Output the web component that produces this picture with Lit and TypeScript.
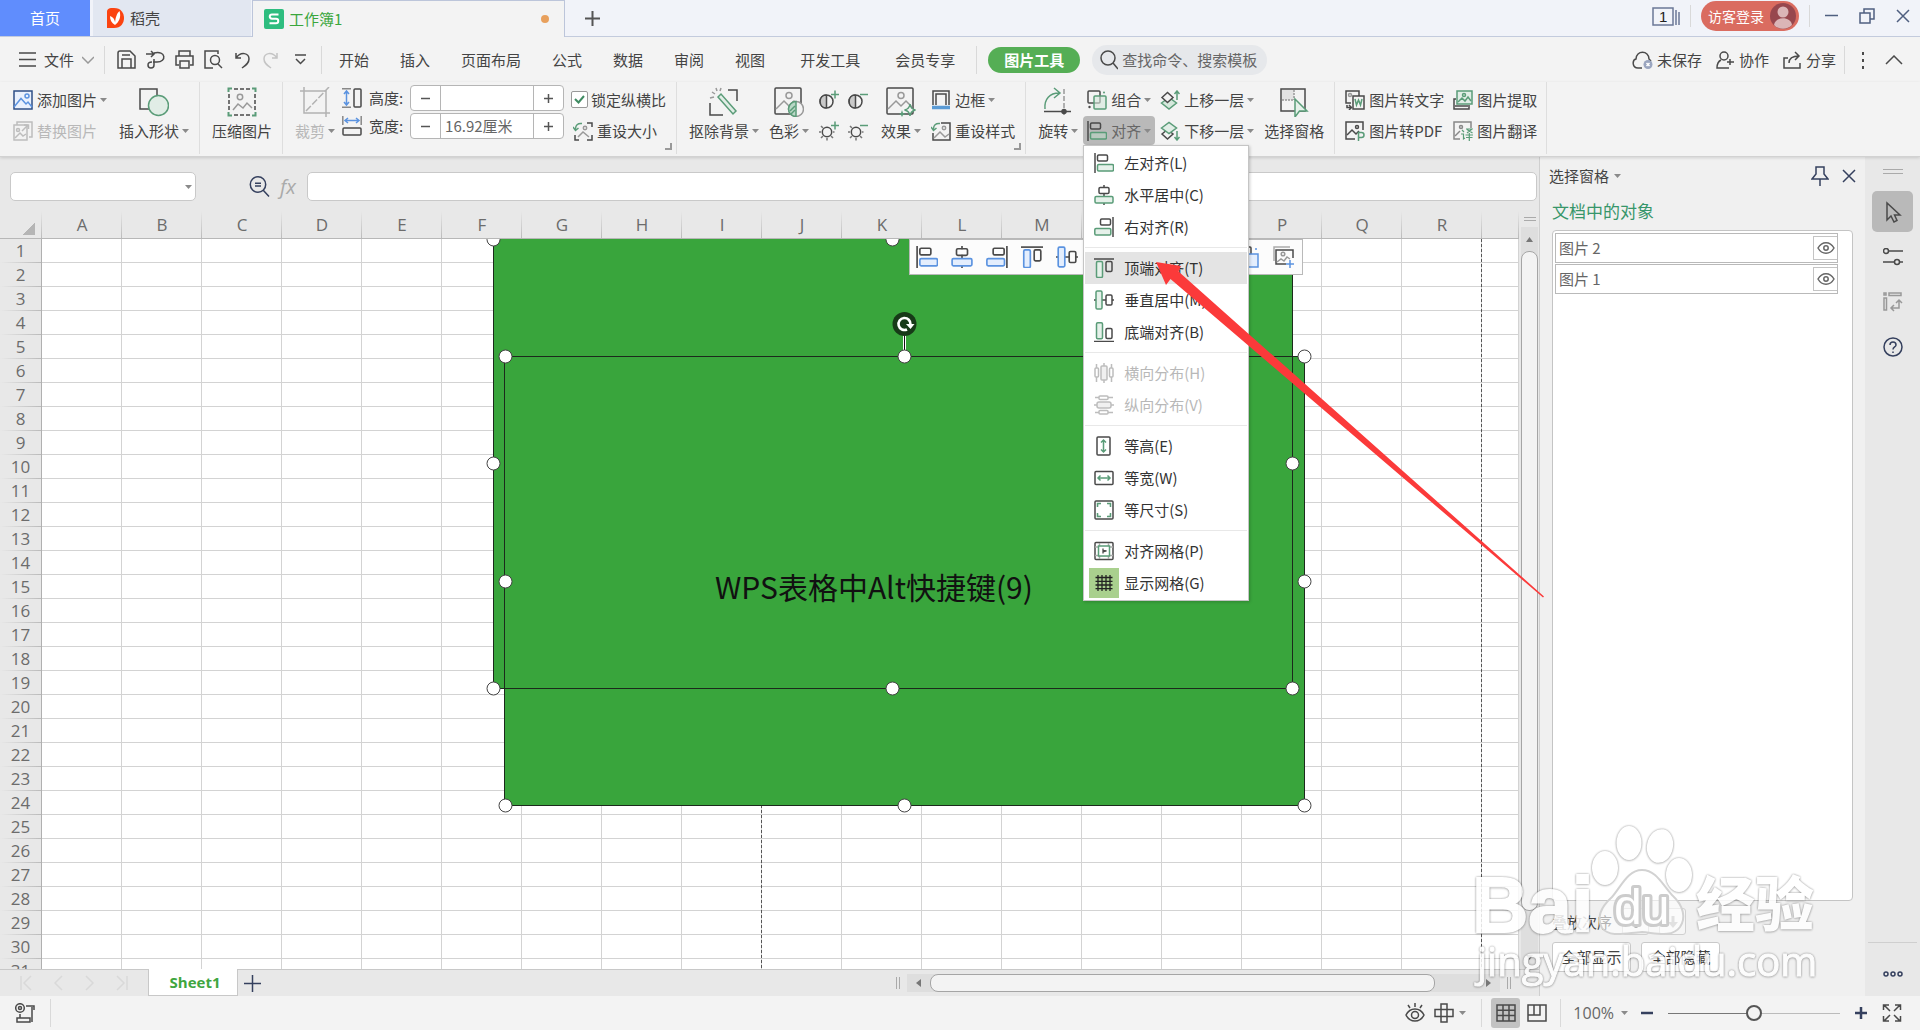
import { LitElement, html, svg, css, nothing, TemplateResult, SVGTemplateResult } from "lit";
import { customElement, state } from "lit/decorators.js";
import { classMap } from "lit/directives/class-map.js";

const INK = "#4a4a4a";
const GREEN = "#5a9c78";
const BLUE = "#5b93e0";
const NAVY = "#35405e";

/** Wraps icon strokes in an svg of the given size. */
const icon = (w: number, h: number, body: SVGTemplateResult | SVGTemplateResult[], stroke = INK, vb = `0 0 ${w} ${h}`) =>
  html`<svg class="icon" width=${w} height=${h} viewBox=${vb} fill="none" stroke=${stroke} stroke-width="1.5" aria-hidden="true">${body}</svg>`;

const caret = html`<svg class="caret" width="7" height="4" viewBox="0 0 7 4" aria-hidden="true"><path d="M0 0H7L3.5 4Z" fill="#8a8a8a"/></svg>`;

type AlignKind = "left" | "center" | "right" | "top" | "middle" | "bottom";
const alignShape: Record<AlignKind, { bar: string; a: number[]; b: number[] }> = {
  left: { bar: "M1 0V20", a: [3.5, 2, 10, 6], b: [3.5, 11.5, 16, 6.5] },
  center: { bar: "M10 0V3M10 8V12M10 18V20", a: [5, 2.5, 10, 6], b: [1, 11.5, 18, 6.5] },
  right: { bar: "M19 0V20", a: [6.5, 2, 10, 6], b: [0.8, 11.5, 16, 6.5] },
  top: { bar: "M0 1H20", a: [12, 3.5, 6, 10], b: [2.5, 3.5, 6, 16] },
  middle: { bar: "M0 10H2M8 10H12M18 10H20", a: [12, 5, 6, 10], b: [2, 1, 6, 18] },
  bottom: { bar: "M0 19.5H20", a: [12, 6.5, 6, 10], b: [2.5, 0.8, 6, 16] },
};
const rect = (r: number[], stroke: string, fill = "none") =>
  svg`<rect x=${r[0]} y=${r[1]} width=${r[2]} height=${r[3]} rx="1.2" stroke=${stroke} fill=${fill}/>`;
const alignIcon = (k: AlignKind, accent = GREEN, tint = "#e6f1ea", size = 20) =>
  icon(size, size, [svg`<path d=${alignShape[k].bar}/>`, rect(alignShape[k].a, INK), rect(alignShape[k].b, accent, tint)], INK, "0 0 20 20");

const photo = svg`<rect x="1" y="1" width="26" height="26" rx="1"/><circle cx="15" cy="8.5" r="3" stroke="#999"/><path d="M2 22L10 14L15 19L20 14L26 20" stroke="#999"/>`;

const I = {
  addPic: icon(20, 20, svg`<rect x="1" y="1" width="18" height="18" stroke="#2f4f86" fill="#eaf1fd"/><circle cx="14" cy="6" r="2" stroke=${BLUE}/><path d="M1 17L8 8.500L13 14L15 12L19 17" stroke=${BLUE}/>`),
  swapPic: icon(20, 20, svg`<path d="M4 4V1H19V16H16"/><rect x="1" y="4" width="13" height="15" fill="#f3f3f3"/><circle cx="5" cy="9" r="1.500"/><path d="M2 17L7 12L10 15L13 13"/><path d="M9 10L15 4M11 4H15.500V8"/>`, "#bdbdbd"),
  shapes: icon(30, 30, svg`<rect x="1" y="2" width="17" height="20"/><circle cx="19.500" cy="18.500" r="10" stroke=${GREEN} fill="#e1ede6"/>`),
  compress: icon(30, 30, svg`<path d="M7 2H23M7 28H23M2 7V23M28 7V23" stroke-dasharray="4 2"/><path d="M1.500 5V1.500H5M25 1.500H28.500V5M1.500 25V28.500H5M25 28.500H28.500V25" stroke=${GREEN} stroke-width="2"/><circle cx="13" cy="10" r="2.700" stroke="#999"/><path d="M6 23L11 17L16 21L20 16L25 21" stroke="#999"/>`),
  crop: icon(30, 30, svg`<path d="M4 0V26H30M0 4H26V30"/><path d="M6 24L29 0" stroke-dasharray="7 2"/>`, "#b2b2b2"),
  height: icon(20, 20, svg`<rect x="12" y="1" width="7" height="18" rx="1"/><path d="M0 .8H9M0 19.200H9" stroke="#888"/><path d="M4.500 3V17M2 6L4.500 3L7 6M2 14L4.500 17L7 14" stroke=${BLUE}/>`),
  width: icon(20, 20, svg`<rect x="1" y="12" width="18" height="7" rx="1"/><path d="M.8 0V9M19.200 0V9" stroke="#888"/><path d="M3 4.500H17M6 2L3 4.500L6 7M14 2L17 4.500L14 7" stroke=${BLUE}/>`),
  resetSize: icon(20, 20, svg`<path d="M14 2H19V6M19 14V19H14M6 19H2V14" /><circle cx="12" cy="7" r="1.700" stroke="#999"/><path d="M5 16L10 11L16 16" stroke="#999"/><path d="M2.500 9C2 4 5 2 9 2.500M0 6L2.500 9.500L5.500 7" stroke=${GREEN}/>`),
  resetStyle: icon(20, 20, svg`<path d="M10 2H19V19H2V12"/><circle cx="13" cy="7" r="1.700" stroke="#999"/><path d="M3 17L9 11L14 16L18 13" stroke="#999"/><path d="M2.500 9C2 4 5 2 9 2.500M0 6L2.500 9.500L5.500 7" stroke=${GREEN}/>`),
  cutout: icon(30, 30, svg`<path d="M19 3H28V14M1 16V28H14" /><path d="M9 10L12 7L27 24L24 27Z" stroke=${GREEN} fill="#e1ede6"/><path d="M7 1L8 4M3 5L6 7M1 11L5 10M12 1L11 4" stroke="#999"/>`),
  color: icon(30, 30, svg`${photo}<circle cx="22" cy="22" r="7.500" fill="#f3f3f3" stroke="#999"/><path d="M22 14.500A7.500 7.500 0 0 0 22 29.500Z" fill="#b9d7c6" stroke=${GREEN}/><path d="M16 24L21 19M17 27L21 23" stroke=${GREEN}/>`),
  effect: icon(30, 30, svg`${photo}<path d="M24 17Q24.500 22 29.500 23Q24.500 24 24 29Q23.500 24 18.500 23Q23.500 22 24 17Z" fill="#f3f3f3" stroke=${GREEN}/><path d="M16 23L17 26L20 27L17 28L16 30L15 28L13 27L15 26Z" fill=${GREEN} stroke="none"/>`),
  contrast: (sign: string) => icon(20, 20, svg`<circle cx="7.500" cy="11.500" r="6.500"/><path d="M7.500 5V18M7.500 5C-1 5 -1 18 7.500 18" fill="#c9c9c9"/><path d=${sign === "+" ? "M12 4.500H20M16 .5V8.500" : "M12 4.500H20"} stroke=${GREEN}/>`),
  light: (sign: string) => icon(20, 20, svg`<circle cx="8" cy="11" r="4.700"/><path d="M2 5L4 7M0 11H2M2 17L4 15M8 17V19.500M14 17L12 15M14 11H15.500" stroke="#777"/><path d=${sign === "+" ? "M12 4.500H20M16 .5V8.500" : "M12 4.500H20"} stroke=${GREEN}/>`),
  border: icon(20, 20, svg`<path d="M2 15V1H18V15"/><path d="M5 15V4H15V15"/><path d="M1 17.500H19" stroke="#5b9bd5" stroke-width="3.500"/>`),
  rotate: icon(30, 30, svg`<path d="M2 22C1 12 7 6 16 6M11 1L17 6L11 11" stroke=${GREEN}/><path d="M21 2V30" stroke="#999" stroke-dasharray="5 2"/><path d="M1 24.500H28"/><circle cx="21" cy="24.500" r="2" fill=${INK}/>`),
  group: icon(20, 20, svg`<rect x="1" y="1" width="12" height="12" rx="1"/><rect x="7" y="6" width="12" height="13" rx="1" stroke=${GREEN} fill="#d5e8dc" fill-opacity=".6"/><circle cx="17" cy="2.500" r="1" fill=${GREEN} stroke="none"/><circle cx="2.500" cy="17" r="1.200" fill=${INK} stroke="none"/>`),
  up: icon(20, 20, svg`<path d="M1.500 13L9 7.500L16.500 13L9 19Z" stroke=${GREEN} fill="#d5e8dc"/><path d="M2 7.500L7.500 2.500L13 7.500L7.500 12.500Z" fill="#f3f3f3"/><path d="M17 10V1M14.500 4L17 1L19.500 4" stroke=${GREEN}/>`),
  down: icon(20, 20, svg`<path d="M2 13L7.500 8.500L13 13L7.500 18Z"/><path d="M1.500 7L9 1.500L16.500 7L9 12.500Z" stroke=${GREEN} fill="#e1ede6"/><path d="M17 10V19M14.500 16L17 19L19.500 16" stroke=${GREEN}/>`),
  pane: icon(30, 30, svg`<rect x="2" y="2" width="24" height="22" fill="none"/><path d="M3 3H15V13H3Z" fill="#e3e3e3" stroke="none"/><path d="M15 3V13M3 13H15" stroke="#999" stroke-dasharray="2 1"/><path d="M16 12V30L20.500 24H28Z" stroke=${GREEN} fill="#e6f1ea"/>`),
  toText: icon(20, 20, svg`<path d="M14 6V1H1V13H6"/><circle cx="5" cy="5" r="1.500" stroke="#999"/><rect x="8" y="6" width="11" height="13" fill="#f3f3f3"/><path d="M10 9L11.500 15L13.500 10L15.500 15L17 9" stroke=${GREEN}/><path d="M2 15V17.500H6M4 15L6.500 17.500L4 20"/>`),
  toPdf: icon(20, 20, svg`<path d="M10 18H1V1H18V9"/><circle cx="12" cy="6" r="1.500"/><path d="M2 14L7 9L11 13L14 10"/><path d="M13.500 20V11.500H16.500A2.500 2.500 0 0 1 16.500 16.500H13.500" stroke=${GREEN}/>`),
  extract: icon(20, 20, svg`<path d="M3 9H1V19H16V17"/><path d="M2 16H17"/><rect x="4" y="1" width="15" height="13" stroke=${GREEN} fill="#e1ede6"/><circle cx="11" cy="5" r="1.500" stroke=${GREEN}/><path d="M5 12L9 8L12 11L15 7L18 11" stroke=${GREEN}/>`),
  translate: icon(20, 20, svg`<path d="M7 18H1V1H18V7" stroke="#888"/><circle cx="8" cy="6" r="1.500" stroke="#888"/><path d="M2 15L7 10" stroke="#888"/><path d="M9 9L11 11M8 13H10.500V18L12 17M13 8H19L14 12M14 8.500L19.500 12M12.500 14H20M13 16.500H19.500M16.300 12V20" stroke=${GREEN} stroke-width="1.200"/>`),
  distH: icon(20, 20, svg`<path d="M2.500 1V5M2.500 14V19M17.500 1V5M17.500 14V19M10 0V3M10 17V20"/><rect x="1" y="5" width="3.500" height="9" rx="1"/><rect x="7" y="3" width="6" height="14" rx="1" fill="#f0f0f0"/><rect x="15.500" y="5" width="3.500" height="9" rx="1"/>`, "#bdbdbd"),
  distV: icon(20, 20, svg`<path d="M1 2.500H5M14 2.500H19M1 17.500H5M14 17.500H19M0 10H3M17 10H20"/><rect x="5" y="1" width="9" height="3.500" rx="1"/><rect x="3" y="7" width="14" height="6" rx="2" fill="#f0f0f0"/><rect x="5" y="15.500" width="9" height="3.500" rx="1"/>`, "#bdbdbd"),
  eqH: icon(20, 20, svg`<rect x="3" y="1" width="13" height="18" rx="1"/><path d="M9.500 4V16M7 6.500L9.500 4L12 6.500M7 13.500L9.500 16L12 13.500" stroke=${GREEN}/>`),
  eqW: icon(20, 20, svg`<rect x="1" y="3.500" width="18" height="13" rx="1"/><path d="M4 10H16M6.500 7.500L4 10L6.500 12.500M13.500 7.500L16 10L13.500 12.500" stroke=${GREEN}/>`),
  eqS: icon(20, 20, svg`<rect x="1" y="1" width="18" height="18" rx="1"/><path d="M3.500 7V3.500H7M13 3.500H16.500V7M16.500 13V16.500H13M7 16.500H3.500V13" stroke=${GREEN} fill="#eef3f0"/>`),
  snap: icon(20, 20, svg`<rect x="1" y="1.500" width="18" height="17" rx="1"/><path d="M1 6H19M1 14.500H19M5.500 2V18M14.500 2V18" stroke="#aaa"/><rect x="4.500" y="5" width="11" height="10" fill="#fff" stroke=${GREEN}/><path d="M9 7.500V12.500M9 9.500L12.500 10L9 11" stroke-width="1.300"/>`),
  grid: icon(20, 20, svg`<path d="M4 2V18M8 2V18M12 2V18M16 2V18M1.500 4.500H18.500M1.500 8.300H18.500M1.500 12H18.500M1.500 15.700H18.500" stroke="#222" stroke-width="1.300"/>`),
  eye: icon(18, 14, svg`<path d="M1 7C5 0 13 0 17 7C13 14 5 14 1 7Z"/><circle cx="9" cy="7" r="2.200"/>`, "#666"),
};

const COLS = "ABCDEFGHIJKLMNOPQR".split("");
const ROWS = Array.from({ length: 31 }, (_, i) => i + 1);

interface MenuItem { label: string; icon: TemplateResult; off?: boolean; hot?: boolean; on?: boolean }
const ALIGN_MENU: MenuItem[][] = [
  [
    { label: "左对齐(L)", icon: alignIcon("left") },
    { label: "水平居中(C)", icon: alignIcon("center") },
    { label: "右对齐(R)", icon: alignIcon("right") },
  ],
  [
    { label: "顶端对齐(T)", icon: alignIcon("top"), hot: true },
    { label: "垂直居中(M)", icon: alignIcon("middle") },
    { label: "底端对齐(B)", icon: alignIcon("bottom") },
  ],
  [
    { label: "横向分布(H)", icon: I.distH, off: true },
    { label: "纵向分布(V)", icon: I.distV, off: true },
  ],
  [
    { label: "等高(E)", icon: I.eqH },
    { label: "等宽(W)", icon: I.eqW },
    { label: "等尺寸(S)", icon: I.eqS },
  ],
  [
    { label: "对齐网格(P)", icon: I.snap },
    { label: "显示网格(G)", icon: I.grid, on: true },
  ],
];

const HANDLES = [
  [493, 239], [892, 239], [493, 463], [1292, 463], [493, 688], [892, 688], [1292, 688],
  [505, 356], [904, 356], [1304, 356], [505, 581], [1304, 581], [505, 805], [904, 805], [1304, 805],
];

@customElement("app-root")
export class AppRoot extends LitElement {
  static styles = css`
    :host {
      display: flex;
      flex-direction: column;
      position: relative;
      height: 100vh;
      overflow: hidden;
      background: #e8e8e8;
      color: #444;
      font: 15px/20px "Noto Sans CJK SC", "Open Sans", sans-serif;
      white-space: nowrap;
    }
    *, *::before, *::after { box-sizing: border-box; }
    button, input { font: inherit; color: inherit; margin: 0; padding: 0; border: 0; background: none; outline: none; }
    button { display: flex; align-items: center; }
    a { color: inherit; text-decoration: none; }
    .icon, .caret { flex: none; display: block; }
    .grow { flex: 1; }

    .titlebar { display: flex; height: 37px; background: #f1f3f9; border-bottom: 1px solid #c3cbdd; flex: none; }
    .home { width: 90px; justify-content: center; background: #608dfd; color: #fff; }
    .doc { display: flex; width: 158px; margin-left: 3px; padding-left: 14px; gap: 5px; background: #e2e7f1; }
    .doc.active { width: 313px; margin: 0 0 -1px 1px; padding-left: 11px; background: #f3f3f3; border: 1px solid #bcc5da; border-bottom: 0; color: #3aa63c; }
    .dot { width: 8px; height: 8px; margin: 0 15px 0 auto; border-radius: 4px; background: #e8a05c; }
    .newtab { width: 54px; justify-content: center; }
    .winctl { display: flex; align-items: center; gap: 10px; padding: 0 10px 5px 0; }
    .winctl .sep { height: 22px; }
    .winctl .ctls { display: flex; align-items: center; gap: 21px; padding-left: 5px; }
    .winnum { font: 15px "Liberation Sans", sans-serif; }
    .login { height: 30px; padding: 0 3px 0 7px; gap: 6px; border-radius: 15px; background: #da6c60; color: #fff; font-size: 14px; }
    .sep { width: 1px; height: 28px; background: #d9d9d9; flex: none; }

    .menubar { display: flex; align-items: center; height: 45px; padding: 0 13px 0 19px; background: #f3f3f3; flex: none; }
    .file { gap: 8px; margin-right: 10px; }
    .quick { display: flex; align-items: center; gap: 10px; padding: 0 11px 0 12px; }
    .tabs { display: flex; align-items: center; gap: 31px; padding: 0 21px 0 17px; }
    .tabs .wide { margin-left: 4px; }
    .pill { height: 26px; margin: 0 12px 0 11px; padding: 0 16px; border-radius: 13px; background: #55ae55; color: #fff; font-weight: 700; }
    .search { display: flex; align-items: center; width: 175px; height: 30px; padding: 0 8px; gap: 4px; border-radius: 15px; background: #e6e8eb; color: #666; }
    .search input { flex: 1; min-width: 0; }
    .search input::placeholder { color: #666; opacity: 1; }
    .share { display: flex; align-items: center; gap: 14px; padding-right: 8px; }
    .share button { gap: 4px; }
    .more { display: flex; align-items: center; gap: 12px; padding: 0 4px; }

    .ribbon { display: flex; height: 75px; background: #f3f3f3; border-bottom: 1px solid #d2d2d2; box-shadow: 0 1px 3px #0002; flex: none; position: relative; z-index: 3; }
    .rgroup { display: flex; position: relative; padding: 3px 10px 0 12px; border-right: 1px solid #dedede; margin-bottom: 2px; }
    .rgroup.first { padding-left: 13px; }
    .rgroup.last { padding: 3px 9px 0 10px; }
    .rows { display: grid; grid-template-rows: 29px 29px; gap: 2px; }
    .rows.tight { grid-template-rows: 26px 26px; }
    .small { gap: 4px; }
    .small .caret { margin-left: -1px; }
    .off { color: #b8b8b8; }
    .big { flex-direction: column; height: 61px; padding-top: 2px; gap: 4px; justify-content: flex-start; }
    .big .lbl { display: flex; align-items: center; gap: 3px; }
    .corner { position: absolute; right: 4px; bottom: 4px; width: 7px; height: 7px; border: solid #999; border-width: 0 2px 2px 0; }
    .s5 { gap: 5px; } .s7 { gap: 7px; } .s9 { gap: 9px; } .s10 { gap: 10px; } .s12 { gap: 12px; }
    .dim { display: flex; align-items: center; gap: 7px; }
    .dim label { width: 34px; }
    .spin { display: grid; grid-template-columns: 29px 94px 29px; width: 154px; height: 26px; border: 1px solid #b5b5b5; border-radius: 4px; background: #fff; }
    .spin button { justify-content: center; }
    .spin input { border: solid #b5b5b5; border-width: 0 1px; padding-left: 4px; min-width: 0; color: #666; }
    .check { display: flex; align-items: center; gap: 3px; }
    .check input { appearance: none; width: 17px; height: 17px; border: 1px solid #999; border-radius: 2px; background: #fff url("data:image/svg+xml,%3Csvg xmlns='http://www.w3.org/2000/svg' viewBox='0 0 15 15'%3E%3Cpath d='M3 7L6.500 10.500L12 4' fill='none' stroke='%233f8b62' stroke-width='2'/%3E%3C/svg%3E"); }
    .indent { margin-left: 2px; }
    .mini { display: flex; align-items: center; gap: 9px; padding-right: 3px; }
    .pad { padding: 0 4px; }
    .anchor { position: relative; }
    .pressed { height: 29px; background: #b9b9b9; border-radius: 4px; color: #666; }

    .menu { position: absolute; top: 29px; left: 0; width: 166px; padding: 1px; margin: 0; background: #fff; border: 1px solid #c5c5c5; box-shadow: 1px 1px 3px #0003; z-index: 5; }
    .menu .item { width: 100%; height: 32px; gap: 5px; padding-left: 4px; color: #333; }
    .menu .item.off { color: #b8b8b8; }
    .menu .item.hot { background: #e4e4e4; }
    .menu .ico { display: grid; place-items: center; width: 30px; height: 30px; }
    .menu .on .ico { background: #a9d08e; }
    .menu hr { height: 1px; margin: 4px 0; border: 0; background: #e8e8e8; }

    .main { display: flex; flex: 1; min-height: 0; }
    .book { display: flex; flex-direction: column; flex: 1; min-width: 0; }
    .formula { display: flex; align-items: center; height: 54px; padding: 5px 2px 0 10px; flex: none; }
    .name { display: flex; align-items: center; width: 186px; height: 29px; padding-right: 3px; border: 1px solid #c9c9c9; border-radius: 5px; background: #fff; }
    .name input { flex: 1; min-width: 0; }
    .fxset { display: flex; align-items: center; gap: 10px; width: 111px; padding-left: 53px; }
    .fx { font: italic 20px/20px "Open Sans", sans-serif; color: #aaa; }
    .fbox { flex: 1; height: 29px; border: 1px solid #c9c9c9; border-radius: 5px; background: #fff; padding: 0 6px; }

    .sheetwrap { display: flex; flex: 1; min-height: 0; }
    .sheet { position: relative; flex: 1; overflow: hidden; }
    table { width: 100%; table-layout: fixed; border-collapse: separate; border-spacing: 0; background: #fff; }
    th { padding: 0; font: 17px/22px "Open Sans", sans-serif; color: #6c6c6c; background: #e8e8e8; }
    thead th { height: 28px; border-bottom: 1px solid #b7b7b7; background: linear-gradient(#e8e8e8, #bbb) right / 1px 100% no-repeat #e8e8e8; }
    tbody th { height: 24px; border-right: 1px solid #b0b0b0; background: linear-gradient(90deg, #e8e8e8, #bbb) bottom / 100% 1px no-repeat #e8e8e8; }
    td { padding: 0; border: solid #d3d3d3; border-width: 0 1px 1px 0; }
    .c0 { width: 42px; } .c { width: 80px; }
    .all { display: block; width: 13px; height: 13px; margin: 8px 0 0 22px; background: linear-gradient(135deg, transparent 50%, #b5b5b5 50%); }
    .layer { position: absolute; inset: 28px 0 0 42px; overflow: hidden; }
    .layer svg.art { display: block; }
    .caption { font: 30px "Noto Sans CJK SC", sans-serif; fill: #111; }
    .float { position: absolute; left: 867px; top: 0; display: flex; align-items: center; gap: 13px; width: 394px; height: 36px; padding: 0 8px 0 6px; background: #fcfcfc; border: 1px solid #b9b9b9; }
    .float .end { margin-left: auto; }

    .vbar { display: flex; flex-direction: column; align-items: center; width: 20px; padding: 6px 1px 0 2px; }
    .grip { width: 12px; height: 4px; border: solid #aaa; border-width: 1px 0; margin-bottom: 6px; flex: none; }
    .vtrack { display: flex; flex-direction: column; flex: 1; width: 17px; background: #dedede; }
    .vtrack button { height: 24px; justify-content: center; }
    .thumb { border: 1px solid #a5a5a5; border-radius: 8px; background: #f3f3f3; }
    .vtrack .thumb { height: 660px; max-height: 90%; }

    .sheets { display: flex; align-items: center; height: 27px; border-top: 1px solid #c8c8c8; flex: none; }
    .nav { display: flex; align-items: center; gap: 20px; width: 148px; padding-left: 20px; }
    .tab1 { width: 90px; height: 27px; margin-top: -1px; padding-left: 4px; justify-content: center; background: #fff; border: solid #c8c8c8; border-width: 0 1px 1px; color: #3fa63f; font: 700 15px/20px "Open Sans", sans-serif; }
    .addsheet { margin-left: 6px; }
    .hset { display: flex; align-items: center; gap: 7px; width: 643px; padding-right: 28px; }
    .vgrip { width: 4px; height: 12px; border: solid #aaa; border-width: 0 1px; }
    .htrack { display: flex; align-items: center; flex: 1; height: 18px; background: #dedede; padding: 0 9px; gap: 9px; }
    .htrack .thumb { flex: 0 1 505px; height: 18px; }

    .side { display: flex; flex-direction: column; width: 326px; padding: 0 12px; background: #f0f0f0; border-left: 1px solid #cfcfcf; }
    .sidehead { display: flex; align-items: center; height: 38px; margin-left: -3px; gap: 5px; }
    .sidehead .x { margin: 0 -3px 0 8px; }
    .side h2 { margin: 6px 0 9px; font: 17px/20px "Noto Sans CJK SC", sans-serif; color: #37966a; }
    .objs { flex: 1; min-height: 0; margin: 0; padding: 2px 14px 0 2px; list-style: none; background: #fff; border: 1px solid #c4c4c4; border-radius: 4px; }
    .objs li { display: flex; align-items: center; height: 30px; margin-bottom: 1px; padding-left: 3px; border: 1px solid #b9b9b9; color: #666; }
    .objs li button { width: 24px; height: 24px; margin-left: auto; justify-content: center; border: 1px solid #c4c4c4; border-right: 0; }
    .order { display: flex; align-items: center; gap: 10px; height: 27px; margin: 7px 0 7px; }
    .order button { width: 27px; height: 27px; justify-content: center; border: 1px solid #d0d0d0; border-radius: 3px; background: #f6f6f6; }
    .vis { display: flex; gap: 10px; margin-bottom: 24px; }
    .vis button { width: 79px; height: 30px; justify-content: center; border: 1px solid #c9c9c9; border-radius: 3px; background: #fff; }

    .strip { display: flex; flex-direction: column; align-items: center; width: 55px; padding: 12px 0 19px; }
    .strip .grip { width: 20px; height: 5px; margin-bottom: 17px; }
    .tool { width: 41px; height: 41px; justify-content: center; margin-bottom: 4px; border-radius: 5px; }
    .tool.sel { background: #b9b9b9; }
    .strip .line { width: 49px; height: 1px; background: #cfcfcf; margin-bottom: 28px; }

    .status { display: flex; align-items: center; height: 34px; padding: 0 18px 0 15px; background: #f3f3f3; flex: none; }
    .status .macro { margin-right: 15px; }
    .status .views { display: flex; align-items: center; gap: 7px; }
    .status .views.a { gap: 9px; margin-right: 15px; }
    .status .views.b { padding: 0 13px 0 9px; }
    .status .cross { gap: 5px; }
    .gridbtn { width: 29px; height: 30px; justify-content: center; border-radius: 3px; background: #c2c2c2; }
    .zoom { gap: 7px; padding: 0 13px 0 12px; color: #666; font: 16px/20px "Open Sans", sans-serif; }
    .status input { appearance: none; width: 172px; height: 16px; margin: 0 15px; background: linear-gradient(90deg, #777 50%, #bbb 50%) center / 100% 1px no-repeat; }
    .status input::-webkit-slider-thumb { appearance: none; width: 16px; height: 16px; border: 2px solid #555; border-radius: 8px; background: #f3f3f3; }
    .full { margin-left: 15px; }

    .arrow { position: absolute; left: 1156px; top: 262px; z-index: 8; pointer-events: none; }
    .mark { position: absolute; right: 90px; bottom: 20px; z-index: 9; pointer-events: none; }
    .mark .glow { filter: drop-shadow(0 0 1px #0007) drop-shadow(0 1px 1px #0002); opacity: .84; }
    .mark .bai { font: 700 78px "Liberation Sans", sans-serif; fill: #fff; stroke: #fff; stroke-width: 2; }
    .mark .du { font: 50px "Liberation Sans", sans-serif; fill: #fff; stroke: #ccc; stroke-width: 6; stroke-linejoin: round; paint-order: stroke; }
    .mark .jy { font: 900 59px "Noto Sans CJK SC", sans-serif; fill: #fff; }
    .mark .url { font: 40px "Open Sans", sans-serif; fill: #fff; stroke: #fff; stroke-width: 1; }
  `;

  @state() private menuOpen = true;
  @state() private zoomLevel = 50;

  private big(label: string, glyph: TemplateResult, drop = true, off = false) {
    return html`<button class=${classMap({ big: true, off })} ?disabled=${off}>${glyph}<span class="lbl">${label}${drop ? caret : nothing}</span></button>`;
  }
  private small(label: string, glyph: TemplateResult, drop = false, cls = "") {
    return html`<button class="small ${cls}">${glyph}<span>${label}</span>${drop ? caret : nothing}</button>`;
  }
  private spin(id: string, label: string, value: string, glyph: TemplateResult) {
    return html`<div class="dim">${glyph}<label for=${id}>${label}</label>
      <div class="spin">
        <button aria-label="减小${label}">${icon(9, 9, svg`<path d="M0 4.500H9"/>`, "#555")}</button>
        <input id=${id} .value=${value} />
        <button aria-label="增大${label}">${icon(9, 9, svg`<path d="M0 4.500H9M4.500 0V9"/>`, "#555")}</button>
      </div></div>`;
  }

  private renderTitle() {
    return html`<header class="titlebar">
      <button class="home">首页</button>
      <button class="doc">${icon(18, 20, svg`<path d="M0 4C0 1 2 0 5 0H7C14 0 17 5 17 10S14 20 7 20H0Z" fill="#fb4310" stroke="none"/><path d="M8 17C4.500 15 3 12 3 8C6 9 7.500 11 8 14M8 17C8 10 10 5 12.500 3C14.500 9 12 14 8 17" fill="#fff" stroke="none"/>`)}<span>稻壳</span></button>
      <button class="doc active">${icon(20, 20, svg`<rect width="20" height="20" rx="2" fill="#2ebd7f" stroke="none"/><path d="M14.500 5.500H8C5 5.500 5 9.700 8 9.700H12C15 9.700 15 14.300 12 14.300H5.500" stroke="#fff" stroke-width="2"/>`)}<span>工作簿1</span><i class="dot"></i></button>
      <button class="newtab" aria-label="新建标签">${icon(15, 15, svg`<path d="M7.500 0V15M0 7.500H15" stroke-width="2"/>`, "#555")}</button>
      <span class="grow"></span>
      <div class="winctl">
        <button aria-label="窗口列表">${icon(28, 20, svg`<rect x="1" y="2" width="20" height="17" stroke="#6b7897"/><path d="M24 4V19M27 6V19" stroke="#6b7897"/><text class="winnum" x="7" y="16" fill="#222" stroke="none">1</text>`)}</button>
        <span class="sep"></span>
        <button class="login">访客登录${icon(26, 26, svg`<circle cx="13" cy="13" r="13" fill="#97474e" stroke="none"/><circle cx="13" cy="9" r="5.500" fill="#dbb5b7" stroke="none"/><path d="M4 22C5 13 21 13 22 22C17 27 9 27 4 22Z" fill="#dbb5b7" stroke="none"/>`)}</button>
        <span class="sep"></span>
        <div class="ctls">
          <button aria-label="最小化">${icon(13, 13, svg`<path d="M0 6.500H13"/>`, "#4f5f80")}</button>
          <button aria-label="还原">${icon(16, 16, svg`<path d="M5 5V1H15V11H11"/><rect x="1" y="5" width="10" height="10"/>`, "#4f5f80")}</button>
          <button aria-label="关闭">${icon(14, 14, svg`<path d="M1 1L13 13M13 1L1 13"/>`, "#4f5f80")}</button>
        </div>
      </div>
    </header>`;
  }

  private renderMenubar() {
    const q = [
      ["保存", svg`<path d="M1 3Q1 1 3 1H13L18 6V18H1Z"/><path d="M5 18V9H14V18M5 5H13"/>`],
      ["输出", svg`<path d="M0 4H8M5 1L8 4L5 7M8 3C20 0 21 12 11 12H7M8 9V15Q8 18 5 18Q2 18 2 15Q2 12 6 12"/>`],
      ["打印", svg`<path d="M4 6V1H15V6M4 15H1V6H18V15H15M5 11H14V18H5Z"/>`],
      ["预览", svg`<path d="M5 18H1V1H14V4M1 18H9"/><circle cx="11" cy="10" r="4.500"/><path d="M14 14L18 18"/>`],
      ["撤销", svg`<path d="M3 3V8H8M3 8C8 1 16 3 16 9C16 13 13 15 9 18"/>`],
    ] as [string, SVGTemplateResult][];
    return html`<nav class="menubar">
      <button class="file">${icon(17, 15, svg`<path d="M0 1H17M0 7.500H17M0 14H17"/>`)}<span>文件</span>${icon(12, 8, svg`<path d="M0 1L6 7L12 1"/>`, "#999")}</button>
      <span class="sep"></span>
      <div class="quick">
        ${q.map(([n, g]) => html`<button aria-label=${n}>${icon(19, 19, g)}</button>`)}
        <button aria-label="恢复">${icon(19, 19, svg`<path d="M15 3V8H10M15 8C10 1 2 3 2 9C2 13 5 15 9 18"/>`, "#c4c4c4")}</button>
        <button class="pad" aria-label="更多">${icon(11, 11, svg`<path d="M0 1H11M1 5L5.500 9.500L10 5"/>`)}</button>
      </div>
      <span class="sep"></span>
      <div class="tabs">
        ${["开始", "插入", "页面布局", "公式", "数据", "审阅", "视图", "开发工具", "会员专享"].map((t, i) => html`<a href="#" class=${classMap({ wide: i > 6 })}>${t}</a>`)}
      </div>
      <span class="sep"></span>
      <button class="pill">图片工具</button>
      <label class="search">${icon(18, 20, svg`<circle cx="8" cy="8" r="7"/><path d="M13 13L18 19"/>`)}<input aria-label="查找" placeholder="查找命令、搜索模板" /></label>
      <span class="grow"></span>
      <div class="share">
        <button>${icon(21, 18, svg`<path d="M10 17H6C0 17 0 9 4 8C4 -1 17 -1 17 8L19 10"/><circle cx="16" cy="13.500" r="4.500" fill="#9aa5bf" stroke="none"/><path d="M14.500 12L17.500 15M17.500 12L14.500 15" stroke="#fff"/>`)}未保存</button>
        <button>${icon(19, 18, svg`<circle cx="8" cy="5" r="4"/><path d="M5 9C1 11 1 14 1 17H13M14 8V14M11 11H18"/>`)}协作</button>
        <button>${icon(19, 18, svg`<path d="M5 7H1V17H17V12M6 12C6 7 9 5 16 5M12 1L16 5L12 9"/>`)}分享</button>
      </div>
      <span class="sep"></span>
      <div class="more">
        <button aria-label="更多选项">${icon(24, 18, svg`<path d="M14 1V4M14 8V11M14 15V18" stroke-width="2"/>`)}</button>
        <button aria-label="收起功能区">${icon(18, 10, svg`<path d="M1 9L9 1L17 9"/>`)}</button>
      </div>
    </nav>`;
  }

  private renderMenu() {
    if (!this.menuOpen) return nothing;
    return html`<div class="menu" role="menu">
      ${ALIGN_MENU.map((g, i) => html`${i ? html`<hr />` : nothing}${g.map((m) => html`
        <button role="menuitem" class=${classMap({ item: true, off: !!m.off, hot: !!m.hot, on: !!m.on })} ?disabled=${!!m.off}>
          <span class="ico">${m.icon}</span><span>${m.label}</span>
        </button>`)}`)}
    </div>`;
  }

  private renderRibbon() {
    return html`<section class="ribbon">
      <div class="rgroup first s12">
        <div class="rows">${this.small("添加图片", I.addPic, true)}${this.small("替换图片", I.swapPic, false, "off")}</div>
        ${this.big("插入形状", I.shapes)}
      </div>
      <div class="rgroup">${this.big("压缩图片", I.compress, false)}</div>
      <div class="rgroup s7">
        ${this.big("裁剪", I.crop, true, true)}
        <div class="rows tight">${this.spin("h", "高度:", "", I.height)}${this.spin("w", "宽度:", "16.92厘米", I.width)}</div>
        <div class="rows">
          <label class="check"><input type="checkbox" checked />锁定纵横比</label>
          ${this.small("重设大小", I.resetSize, false, "indent")}
        </div>
        <i class="corner"></i>
      </div>
      <div class="rgroup s10">
        ${this.big("抠除背景", I.cutout)}
        ${this.big("色彩", I.color)}
        <div class="rows">
          <div class="mini"><button aria-label="增加对比度">${I.contrast("+")}</button><button aria-label="降低对比度">${I.contrast("-")}</button></div>
          <div class="mini"><button aria-label="增加亮度">${I.light("+")}</button><button aria-label="降低亮度">${I.light("-")}</button></div>
        </div>
        ${this.big("效果", I.effect)}
        <div class="rows">${this.small("边框", I.border, true)}${this.small("重设样式", I.resetStyle)}</div>
        <i class="corner"></i>
      </div>
      <div class="rgroup s5">
        ${this.big("旋转", I.rotate)}
        <div class="rows">
          ${this.small("组合", I.group, true, "pad")}
          <div class="anchor">
            <button class="small pad pressed" aria-haspopup="menu" aria-expanded=${this.menuOpen} @click=${() => (this.menuOpen = !this.menuOpen)}>${alignIcon("left", GREEN, "#b9c9bf")}<span>对齐</span>${caret}</button>
            ${this.renderMenu()}
          </div>
        </div>
        <div class="rows">${this.small("上移一层", I.up, true)}${this.small("下移一层", I.down, true)}</div>
        <span></span>
        ${this.big("选择窗格", I.pane, false)}
      </div>
      <div class="rgroup last s9">
        <div class="rows">${this.small("图片转文字", I.toText)}${this.small("图片转PDF", I.toPdf)}</div>
        <div class="rows">${this.small("图片提取", I.extract)}${this.small("图片翻译", I.translate)}</div>
      </div>
    </section>`;
  }

  private renderSheet() {
    const kinds: AlignKind[] = ["left", "center", "right", "top", "middle", "bottom"];
    return html`<div class="sheet">
      <table>
        <colgroup><col class="c0" />${COLS.map(() => html`<col class="c" />`)}<col /></colgroup>
        <thead><tr><th aria-label="全选"><span class="all"></span></th>${COLS.map((c) => html`<th scope="col">${c}</th>`)}<th></th></tr></thead>
        <tbody>${ROWS.map((r) => html`<tr><th scope="row">${r}</th>${COLS.map(() => html`<td></td>`)}<td></td></tr>`)}</tbody>
      </table>
      <div class="layer">
        <svg class="art" width="1477" height="740" viewBox="42 239 1477 740">
          <path d="M1481.500 239V979M761.500 700V979" stroke="#555" stroke-dasharray="3 2" fill="none"/>
          <rect x="493" y="239" width="799" height="449" fill="#39a53c"/>
          <rect x="505" y="356" width="799" height="449" fill="#39a53c"/>
          <text class="caption" x="715" y="599">WPS表格中Alt快捷键(9)</text>
          <g fill="none" stroke="#1c2a1c"><rect x="493.500" y="230.500" width="799" height="458"/><rect x="504.500" y="356.500" width="800" height="449"/></g>
          <path d="M904.500 335V351" stroke="#fff" stroke-width="3"/><path d="M904.500 335V351" stroke="#111"/>
          ${HANDLES.map(([x, y]) => svg`<circle cx=${x + 0.5} cy=${y + 0.5} r="6.500" fill="#fff" stroke="#444"/>`)}
          <circle cx="904.500" cy="324" r="12" fill="#173a18"/>
          <path d="M907 329.500A6 6 0 1 1 910.500 324.500" fill="none" stroke="#fff" stroke-width="2.600"/><path d="M906 324H914.500L910.500 329Z" fill="#fff"/>
        </svg>
        <div class="float">
          ${kinds.map((k) => html`<button aria-label=${k}>${alignIcon(k, BLUE, "#e4eefd", 22)}</button>`)}
          <button class="end" aria-label="group">${icon(22, 22, svg`<rect x="1" y="1" width="13" height="13" rx="1"/><rect x="8" y="8" width="13" height="13" stroke=${BLUE} fill="#e4eefd"/><circle cx="19" cy="3" r="1" fill=${BLUE} stroke="none"/>`)}</button>
          <button aria-label="picture">${icon(22, 22, svg`<path d="M2 15V1H18" stroke="#aaa"/><path d="M14 18H4V4H21V12"/><circle cx="11" cy="8" r="1.800" stroke="#999"/><path d="M5 16L9 13L12 15L15 11L18 13" stroke="#999"/><path d="M18 14V22M14 18H22" stroke=${BLUE}/>`)}</button>
        </div>
      </div>
    </div>`;
  }

  private renderBook() {
    return html`<main class="book">
      <div class="formula">
        <div class="name"><input aria-label="名称框" />${caret}</div>
        <div class="fxset">${icon(21, 21, svg`<circle cx="9" cy="8.500" r="7.700"/><path d="M14 14L20 20.500M6 7.200H12M6 10H12"/>`, NAVY)}<span class="fx">fx</span></div>
        <input class="fbox" aria-label="编辑栏" />
      </div>
      <div class="sheetwrap">
        ${this.renderSheet()}
        <div class="vbar">
          <i class="grip"></i>
          <div class="vtrack">
            <button aria-label="向上滚动">${icon(7, 5, svg`<path d="M0 5L3.500 0L7 5Z" fill="#777" stroke="none"/>`)}</button>
            <div class="thumb"></div><span class="grow"></span>
            <button aria-label="向下滚动">${icon(7, 5, svg`<path d="M0 0L3.500 5L7 0Z" fill="#777" stroke="none"/>`)}</button>
          </div>
        </div>
      </div>
      <div class="sheets">
        <div class="nav">
          ${["M1 1V15M11 1L4 8L11 15", "M10 1L3 8L10 15", "M2 1L9 8L2 15", "M1 1L8 8L1 15M11 1V15"].map((d) => html`<button disabled aria-label="切换工作表">${icon(12, 16, svg`<path d=${d}/>`, "#d9d9d9")}</button>`)}
        </div>
        <button class="tab1">Sheet1</button>
        <button class="addsheet" aria-label="新建工作表">${icon(17, 17, svg`<path d="M8.500 0V17M0 8.500H17"/>`, NAVY)}</button>
        <span class="grow"></span>
        <div class="hset">
          <i class="vgrip"></i>
          <div class="htrack">
            ${icon(5, 8, svg`<path d="M5 0L0 4L5 8Z" fill="#777" stroke="none"/>`)}
            <div class="thumb"></div><span class="grow"></span>
            ${icon(5, 8, svg`<path d="M0 0L5 4L0 8Z" fill="#777" stroke="none"/>`)}
          </div>
          <i class="vgrip"></i>
        </div>
      </div>
    </main>`;
  }

  private renderSide() {
    return html`<aside class="side">
      <div class="sidehead">选择窗格${caret}<span class="grow"></span>
        <button aria-label="固定">${icon(18, 20, svg`<path d="M5 1H13V8L17 13H1L5 8ZM9 13V20"/>`, NAVY)}</button>
        <button class="x" aria-label="关闭窗格">${icon(14, 14, svg`<path d="M1 1L13 13M13 1L1 13"/>`, NAVY)}</button>
      </div>
      <h2>文档中的对象</h2>
      <ul class="objs">
        ${["图片 2", "图片 1"].map((n) => html`<li>${n}<button aria-label="显示或隐藏 ${n}">${I.eye}</button></li>`)}
      </ul>
      <div class="order"><span>叠放次序</span>
        <button aria-label="上移">${icon(12, 12, svg`<path d="M6 12V3" stroke-width="3"/><path d="M1 6L6 0L11 6Z" fill=${INK} stroke="none"/>`)}</button>
        <button aria-label="下移">${icon(12, 12, svg`<path d="M6 0V9" stroke-width="3"/><path d="M1 6L6 12L11 6Z" fill="#b5b5b5" stroke="none"/>`, "#b5b5b5")}</button>
      </div>
      <div class="vis"><button>全部显示</button><button>全部隐藏</button></div>
    </aside>
    <div class="strip">
      <i class="grip"></i>
      <button class="tool sel" aria-label="选择">${icon(18, 22, svg`<path d="M3 2V19L7 15L10 21L13 19.500L10.500 14H16Z"/>`)}</button>
      <button class="tool" aria-label="属性">${icon(20, 18, svg`<circle cx="3" cy="3" r="2.500"/><path d="M6 3H20M0 14H11M17 14H20"/><circle cx="14" cy="14" r="2.500"/>`)}</button>
      <button class="tool" aria-label="分析">${icon(20, 20, svg`<rect x="1" y="1" width="2" height="2"/><rect x="6" y="1" width="12" height="2.500"/><rect x="1" y="6" width="2.500" height="12"/><path d="M8 16H16V8M11 13L8 16L11 19M13 11L16 8L19 11"/>`, "#999")}</button>
      <button class="tool" aria-label="帮助">${icon(20, 20, svg`<circle cx="10" cy="10" r="9"/><path d="M7 8C7 4 13 4 13 8C13 10 10 10 10 12.500M10 14.500V16"/>`, NAVY)}</button>
      <span class="grow"></span>
      <span class="line"></span>
      <button aria-label="更多工具">${icon(20, 6, svg`<circle cx="3" cy="3" r="2"/><circle cx="10" cy="3" r="2"/><circle cx="17" cy="3" r="2"/>`, NAVY)}</button>
    </div>`;
  }

  private renderStatus() {
    return html`<footer class="status">
      <button class="macro" aria-label="录制宏">${icon(20, 20, svg`<circle cx="5" cy="5" r="4.300"/><circle cx="5" cy="5" r="1.500"/><path d="M11 3H19V7M17 4V19M5 11V15M2 15H15V19H2Z"/>`)}</button>
      <span class="sep"></span>
      <span class="grow"></span>
      <div class="views a">
        <button aria-label="护眼模式">${icon(20, 20, svg`<path d="M1 12C5 4 15 4 19 12C15 20 5 20 1 12Z"/><circle cx="10" cy="12" r="3.500"/><path d="M10 0V4M3 2L5 5M17 2L15 5"/>`)}</button>
        <button class="cross" aria-label="阅读模式">${icon(20, 20, svg`<path d="M7 1H13V19H7ZM1 6.500H19V13.500H1Z"/>`)}${caret}</button>
      </div>
      <span class="sep"></span>
      <div class="views b">
        <button class="gridbtn" aria-label="普通视图">${icon(20, 18, svg`<path d="M1 1H19V17H1ZM1 6.300H19M1 11.600H19M7 1V17M13 1V17"/>`)}</button>
        <button aria-label="分页预览">${icon(20, 18, svg`<path d="M1 1H19V17H1ZM1 11H13V1M7 1V11"/>`)}</button>
      </div>
      <span class="sep"></span>
      <button class="zoom">100%${caret}</button>
      <button aria-label="缩小">${icon(12, 12, svg`<path d="M0 6H12" stroke-width="2.500"/>`, NAVY)}</button>
      <input type="range" aria-label="缩放" .value=${String(this.zoomLevel)} @input=${(e: Event) => (this.zoomLevel = +(e.target as HTMLInputElement).value)} />
      <button aria-label="放大">${icon(12, 12, svg`<path d="M0 6H12M6 0V12" stroke-width="2.500"/>`, NAVY)}</button>
      <button class="full" aria-label="全屏">${icon(20, 18, svg`<path d="M8 7L2 1M1.500 6V1H7M12 7L18 1M13 1H18.500V6M8 11L2 17M1.500 12V17H7M12 11L18 17M13 17H18.500V12"/>`)}</button>
    </footer>`;
  }

  render() {
    return html`
      ${this.renderTitle()} ${this.renderMenubar()} ${this.renderRibbon()}
      <div class="main">${this.renderBook()} ${this.renderSide()}</div>
      ${this.renderStatus()}
      <svg class="arrow" width="390" height="338" viewBox="0 0 390 338" aria-hidden="true">
        <path d="M0 0L25 4L22.500 9.500L388 334.500L387 335.500L14.500 17L10 23Z" fill="#fb3a3a"/>
      </svg>
      <svg class="mark" width="360" height="190" viewBox="1470 820 360 190">
        <path fill="#fff" fill-opacity=".6" stroke="#d2d2d2" stroke-width="2" d="M1642 870C1656 870 1662 884 1672 895C1684 906 1686 918 1680 927C1672 938 1656 933 1642 932C1626 933 1610 938 1602 928C1596 917 1602 906 1612 897C1622 885 1628 870 1642 870Z"/>
        <g class="glow">
          <g fill="#fff">
            <ellipse cx="1605" cy="868" rx="13" ry="17"/><ellipse cx="1629" cy="843" rx="12.500" ry="17"/>
            <ellipse cx="1660" cy="846" rx="13" ry="17" transform="rotate(12 1660 846)"/><ellipse cx="1679" cy="875" rx="13" ry="17"/>
          </g>
          <text class="bai" x="1472" y="932">Bai</text>
          <text class="jy" x="1696" y="926">经验</text>
          <text class="url" x="1477" y="976">jingyan.baidu.com</text>
        </g>
        <text class="du" x="1614" y="924">du</text>
      </svg>`;
  }
}
